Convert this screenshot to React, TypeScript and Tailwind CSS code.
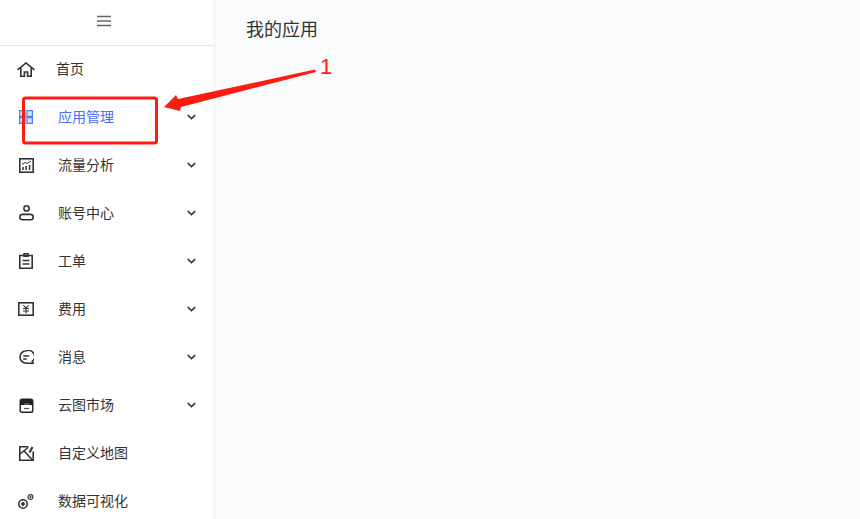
import React from "react";

const s = { fill: "none", stroke: "currentColor", strokeWidth: 1.6 } as const;

const icons: Record<string, React.ReactNode> = {
  home: (<svg width="18" height="15" viewBox="0 0 18 15" {...s}><path d="M.6 7.800 9 1l8.400 6.800" /><path d="M3.800 6v8.200h3.600V10h3.200v4.200h3.600V6" /></svg>),
  apps: (<svg width="14" height="14" viewBox="0 0 14 14" fill="#d5e1ff" stroke="#4d7cfe" strokeWidth="1.200"><rect x="0.600" y="0.600" width="5.400" height="5.800" /><rect x="8" y="0.600" width="5.400" height="5.800" /><rect x="0.600" y="7.600" width="5.400" height="5.800" /><rect x="8" y="7.600" width="5.400" height="5.800" /></svg>),
  chart: (<svg width="15" height="15" viewBox="0 0 15 15" {...s}><rect x="0.800" y="0.800" width="13.400" height="13.400" /><path d="M3 6.500l3-2 2 1 4-2.500" strokeWidth="1" /><path d="M4 12V9M7 12V8M10.500 12V7" strokeWidth="1.500" /></svg>),
  user: (<svg width="15" height="16" viewBox="0 0 15 16" {...s}><circle cx="7.500" cy="3.400" r="2.600" /><rect x="0.800" y="9.400" width="13.400" height="5.400" rx="2.700" /></svg>),
  ticket: (<svg width="14" height="16" viewBox="0 0 14 16" {...s}><path d="M.8 2.500h12.400v12.700H.8z" /><path d="M5 .8h4v2.400H5zM3.500 7.500h7M3.500 11h7" /></svg>),
  fee: (<svg width="16" height="14" viewBox="0 0 16 14" {...s}><rect x="0.800" y="0.800" width="14.400" height="12.400" /><path d="M5.500 3.300 8 6l2.500-2.700M5 6.500h6M5 9h6M8 6v5.500" strokeWidth="1.100" /></svg>),
  msg: (<svg width="15" height="15" viewBox="0 0 15 15" {...s}><path d="M7.200.8a6.200 6.200 0 1 0 0 12.400h7l-1-1.700A6.200 6.200 0 0 0 7.200.8Z" /><path d="M4.200 6h6M4.200 9h3.500" /></svg>),
  shop: (<svg width="15" height="15" viewBox="0 0 15 15"><path d="M3.500.5h8a3 3 0 0 1 3 3V7h-4l-1-2h-4l-1 2H.5V3.500a3 3 0 0 1 3-3z" fill="#222" /><rect x="1.200" y="6" width="12.600" height="8.300" rx="1.800" fill="none" stroke="#222" strokeWidth="1.400" /><path d="M5 10.500h5" stroke="#555" strokeWidth="1.200" /></svg>),
  map: (<svg width="15" height="15" viewBox="0 0 15 15" {...s}><path d="M9.500.8H.8v13.400h13.400V5.500" /><path d="M9 1.500 1 8M5 5l8.500 9" /><path d="M10.500 6.500l3-5.500" strokeWidth="2.200" /></svg>),
  viz: (<svg width="16" height="15" viewBox="0 0 16 15" {...s}><circle cx="5" cy="10" r="4.200" /><circle cx="5" cy="10" r="1.900" fill="currentColor" stroke="none" /><circle cx="12.500" cy="3" r="2.400" strokeWidth="1.100" /><circle cx="12.500" cy="3" r="1" fill="currentColor" stroke="none" /></svg>),
};

const rows = [
  { icon: "home", label: "首页", first: true },
  { icon: "apps", label: "应用管理", arrow: true, active: true },
  { icon: "chart", label: "流量分析", arrow: true },
  { icon: "user", label: "账号中心", arrow: true },
  { icon: "ticket", label: "工单", arrow: true },
  { icon: "fee", label: "费用", arrow: true },
  { icon: "msg", label: "消息", arrow: true },
  { icon: "shop", label: "云图市场", arrow: true },
  { icon: "map", label: "自定义地图" },
  { icon: "viz", label: "数据可视化" },
];

export default function App() {
  return (
    <div className="relative flex h-[519px] w-[860px] overflow-hidden bg-[#fafbfd] font-['Liberation_Sans','Noto_Sans_CJK_SC',sans-serif]">
      <aside className="w-[215px] shrink-0 overflow-hidden border-r border-[#eef0f3] bg-white">
        <div className="flex h-[46px] items-center justify-center border-b border-[#e6e6e6] pb-[3px] pr-[6px]">
          <svg width="14" height="12" viewBox="0 0 14 12" stroke="#666" strokeWidth="1.500"><path d="M0 1.500h14M0 6h14M0 10.500h14" /></svg>
        </div>
        <nav className="-mt-px">
          {rows.map((r) => (
            <div key={r.label} className="flex h-[48px] items-center pl-[18px] pr-[18px]">
              <span className={`flex w-[16px] items-center justify-center [&>svg]:shrink-0 ${r.active ? "text-[#4d7cfe]" : "text-[#333]"}`}>{icons[r.icon]}</span>
              <span className={`text-[14px] leading-[20px] ${r.first ? "ml-[22px]" : "ml-[24px]"} ${r.active ? "text-[#4d6bff]" : "text-[#333]"}`}>{r.label}</span>
              {r.arrow && (
                <svg className="ml-auto" width="9" height="6" viewBox="0 0 9 6" fill="none" stroke="#333" strokeWidth="1.700"><path d="M.8 1l3.700 3.500L8.200 1" /></svg>
              )}
            </div>
          ))}
        </nav>
      </aside>
      <main className="flex-1 pl-[31px] pt-[17px]">
        <h1 className="text-[18px] leading-[26px] font-normal text-[#333]">我的应用</h1>
      </main>
      <svg className="absolute left-0 top-0 pointer-events-none" width="860" height="519" viewBox="0 0 860 519" fill="none">
        <rect x="23.500" y="98" width="133" height="45" rx="2" stroke="#fe1c10" strokeWidth="3" />
        <path d="M164 107 176 95 178 99 315 69.500 316 72 181 107 180 111Z" fill="#fe1c10" />
      </svg>
      <span className="absolute left-[320px] top-[54px] text-[22px] leading-[26px] text-[#fe1c10]">1</span>
    </div>
  );
}
